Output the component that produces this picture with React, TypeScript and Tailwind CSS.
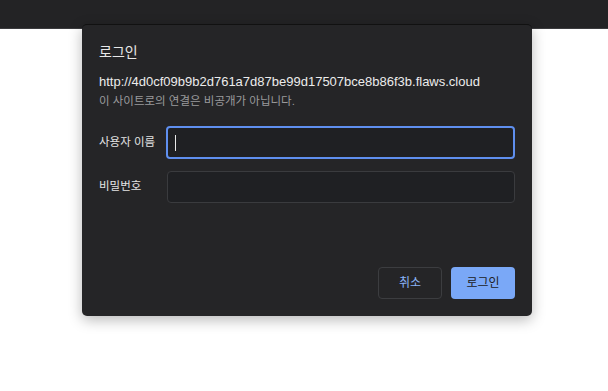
export default function App() {
  const font = { fontFamily: '"Liberation Sans", "Noto Sans CJK KR", sans-serif' };
  return (
    <div className="relative w-[608px] h-[391px] bg-white overflow-hidden" style={font}>
      <div className="h-[29px] bg-[#232325] border-b border-[#3b3b3e]" />
      <div className="absolute left-[82px] top-[24px] w-[450px] h-[292px] bg-[#252527] rounded-[5px] border-t border-[#111] shadow-[0_4px_14px_rgba(0,0,0,0.28)] flex flex-col px-[17px]">
        <div className="mt-[18px] text-[14px] text-[#e8e8e8] leading-[18px]">로그인</div>
        <div className="mt-[13px] text-[13px] text-[#ececec] leading-[16px]">
          http://4d0cf09b9b2d761a7d87be99d17507bce8b86f3b.flaws.cloud
        </div>
        <div className="mt-[3px] text-[11.5px] text-[#9a9a9c] leading-[16px]">이 사이트로의 연결은 비공개가 아닙니다.</div>
        <div className="mt-[17px] flex items-center">
          <div className="w-[67px] text-[11.5px] text-[#e3e3e3]">사용자 이름</div>
          <div className="w-[350px] h-[33px] rounded-[4px] border-2 border-[#5f8fef] bg-[#1f2023] flex items-center pl-[7px]">
            <div className="w-[1.5px] h-[16px] bg-[#e8e8e8]" />
          </div>
        </div>
        <div className="mt-[12px] flex items-center">
          <div className="w-[68px] text-[11.5px] text-[#e3e3e3]">비밀번호</div>
          <div className="w-[348px] h-[32px] rounded-[4px] border border-[#3a3b3e] bg-[#1f2023]" />
        </div>
        <div className="mt-auto mb-[17px] flex justify-end gap-[9px]">
          <button className="w-[64px] h-[32px] rounded-[4px] border border-[#3c3d40] bg-transparent text-[12px] text-[#8ab4f8]">
            취소
          </button>
          <button className="w-[64px] h-[32px] rounded-[4px] bg-[#7aa8f7] text-[12px] text-[#202124]">
            로그인
          </button>
        </div>
      </div>
    </div>
  );
}
